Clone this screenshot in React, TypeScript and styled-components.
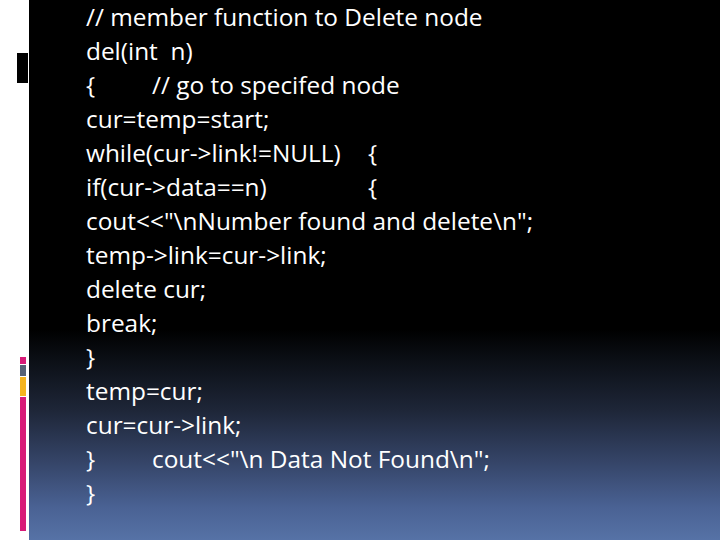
import React from "react";
import styled, { createGlobalStyle } from "styled-components";

const Global = createGlobalStyle`
  html, body { margin: 0; padding: 0; background: #fff; }
  #root { width: 720px; height: 540px; }
`;

const Page = styled.div`
  display: flex;
  width: 720px;
  height: 540px;
  overflow: hidden;
`;

const Rail = styled.div`
  width: 29px;
  flex: none;
  background: #fff;
  display: flex;
  flex-direction: column;
  padding: 53px 0 9px;
  box-sizing: border-box;
`;

const TopMarker = styled.div`
  width: 11px;
  height: 30px;
  margin-left: 17px;
  background: #000;
`;

const Stack = styled.div`
  margin-top: auto;
  margin-left: 20px;
  display: flex;
  flex-direction: column;
  gap: 1px;
`;

const Chip = styled.div<{ $h: number; $c: string }>`
  width: 6px;
  height: ${(p) => p.$h}px;
  background: ${(p) => p.$c};
`;

const Slide = styled.div`
  flex: 1;
  background: linear-gradient(
    to bottom,
    #000 0%,
    #000 61%,
    #0c1017 67%,
    #1e2638 76%,
    #36466a 86%,
    #4a6294 94%,
    #5672a6 100%
  );
  padding: 0 0 0 57px;
  box-sizing: border-box;
`;

const Code = styled.div`
  font-family: "Open Sans", "Lato", sans-serif;
  font-size: 24.4px;
  color: #fff;
  white-space: pre;
`;

const Line = styled.div`
  height: 34px;
  line-height: 34px;
`;

const Tab = styled.span<{ $w: number }>`
  display: inline-block;
  width: ${(p) => p.$w}px;
`;

export default function App() {
  return (
    <>
      <Global />
      <Page>
        <Rail>
          <TopMarker />
          <Stack>
            <Chip $h={7} $c="#d81b78" />
            <Chip $h={11} $c="#576276" />
            <Chip $h={19} $c="#f5b41e" />
            <Chip $h={134} $c="#d81b78" />
          </Stack>
        </Rail>
        <Slide>
          <Code>
            <Line>// member function to Delete node</Line>
            <Line>del(int  n)</Line>
            <Line>
              <Tab $w={66}>{"{"}</Tab>// go to specifed node
            </Line>
            <Line>cur=temp=start;</Line>
            <Line>
              <Tab $w={282}>while(cur-&gt;link!=NULL)</Tab>
              {"{"}
            </Line>
            <Line>
              <Tab $w={282}>if(cur-&gt;data==n)</Tab>
              {"{"}
            </Line>
            <Line>cout&lt;&lt;"\nNumber found and delete\n";</Line>
            <Line>temp-&gt;link=cur-&gt;link;</Line>
            <Line>delete cur;</Line>
            <Line>break;</Line>
            <Line>{"}"}</Line>
            <Line>temp=cur;</Line>
            <Line>cur=cur-&gt;link;</Line>
            <Line>
              <Tab $w={66}>{"}"}</Tab>cout&lt;&lt;"\n Data Not Found\n";
            </Line>
            <Line>{"}"}</Line>
          </Code>
        </Slide>
      </Page>
    </>
  );
}
